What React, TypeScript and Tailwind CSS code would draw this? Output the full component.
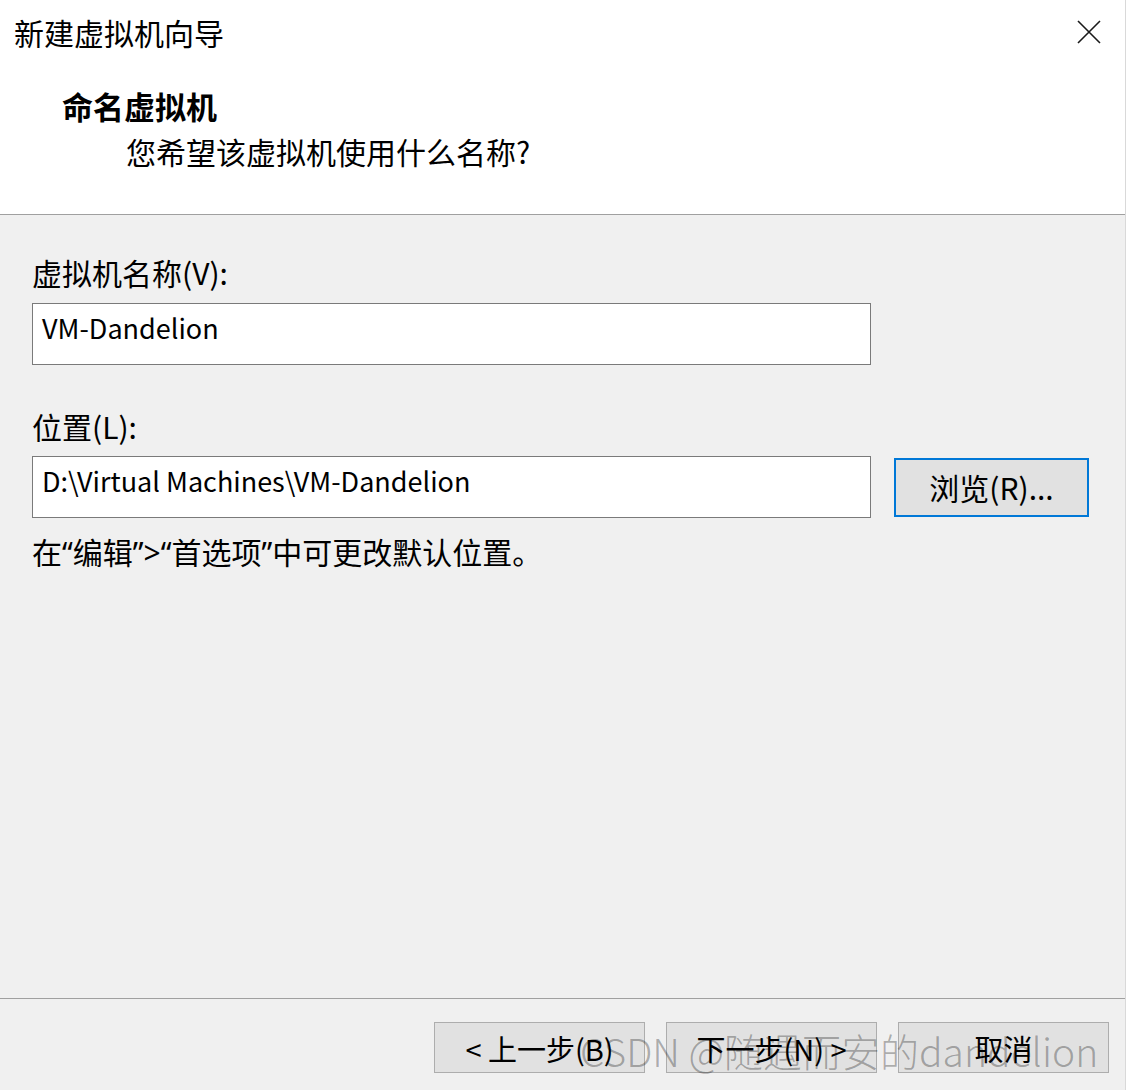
import type { ReactNode } from 'react'

const font = '"Noto Sans CJK SC", "Noto Sans", sans-serif'

function Q({ children }: { children: ReactNode }) {
  // narrow latin quotes, as in the original dialog font
  return <span className="font-['Noto_Sans']">{children}</span>
}

function WinButton({ children }: { children: ReactNode }) {
  return (
    <button className="w-[211px] h-[51px] bg-[#e1e1e1] border border-[#adadad] text-[29px] leading-[36px] text-black flex items-center justify-center">
      {children}
    </button>
  )
}

export default function App() {
  return (
    <div
      className="relative w-[1126px] h-[1090px] bg-[#f0f0f0] flex flex-col text-black border-r border-[#d9d9d9]"
      style={{ fontFamily: font }}
    >
      {/* Header */}
      <header className="h-[215px] bg-white border-b border-[#a0a0a0] flex flex-col">
        <div className="flex items-center justify-between pl-[14px] pr-[24px] pt-[13px]">
          <h1 className="text-[30px] leading-[38px] font-normal">新建虚拟机向导</h1>
          <svg width="24" height="24" viewBox="0 0 24 24" className="text-[#1a1a1a]">
            <path d="M1 1 L23 23 M23 1 L1 23" stroke="currentColor" strokeWidth="1.6" fill="none" />
          </svg>
        </div>
        <h2 className="ml-[62px] mt-[36px] text-[31px] leading-[38px] font-bold">命名虚拟机</h2>
        <p className="ml-[126px] mt-[7px] text-[30px] leading-[38px]">您希望该虚拟机使用什么名称?</p>
      </header>

      {/* Body */}
      <main className="flex-1 px-[32px] pt-[38px] flex flex-col">
        <label className="text-[30px] leading-[38px]">虚拟机名称(V):</label>
        <div className="mt-[12px] w-[839px] h-[62px] bg-white border border-[#7a7a7a] pl-[9px] pt-[5px] text-[27px] leading-[38px]">
          VM-Dandelion
        </div>

        <label className="mt-[42px] text-[30px] leading-[38px]">位置(L):</label>
        <div className="mt-[11px] flex items-center gap-[23px]">
          <div className="w-[839px] h-[62px] bg-white border border-[#7a7a7a] pl-[9px] pt-[5px] text-[27px] leading-[38px]">
            D:\Virtual Machines\VM-Dandelion
          </div>
          <button className="w-[195px] h-[59px] bg-[#e1e1e1] border-2 border-[#0078d7] text-[30px] leading-[36px] flex items-center justify-center">
            浏览(R)...
          </button>
        </div>

        <p className="mt-[14px] text-[30px] leading-[38px]">
          在<Q>“</Q>编辑<Q>”&gt;“</Q>首选项<Q>”</Q>中可更改默认位置。
        </p>
      </main>

      {/* Footer */}
      <footer className="h-[92px] border-t border-[#a0a0a0] flex justify-end gap-[21px] pt-[23px] pr-[16px]">
        <WinButton>&lt; 上一步(B)</WinButton>
        <WinButton>下一步(N) &gt;</WinButton>
        <WinButton>取消</WinButton>
      </footer>

      {/* watermark */}
      <div className="absolute left-[580px] top-[1025px] text-[39px] leading-[50px] font-light text-black/30 whitespace-nowrap pointer-events-none">
        CSDN @随遇而安的dandelion
      </div>
    </div>
  )
}
